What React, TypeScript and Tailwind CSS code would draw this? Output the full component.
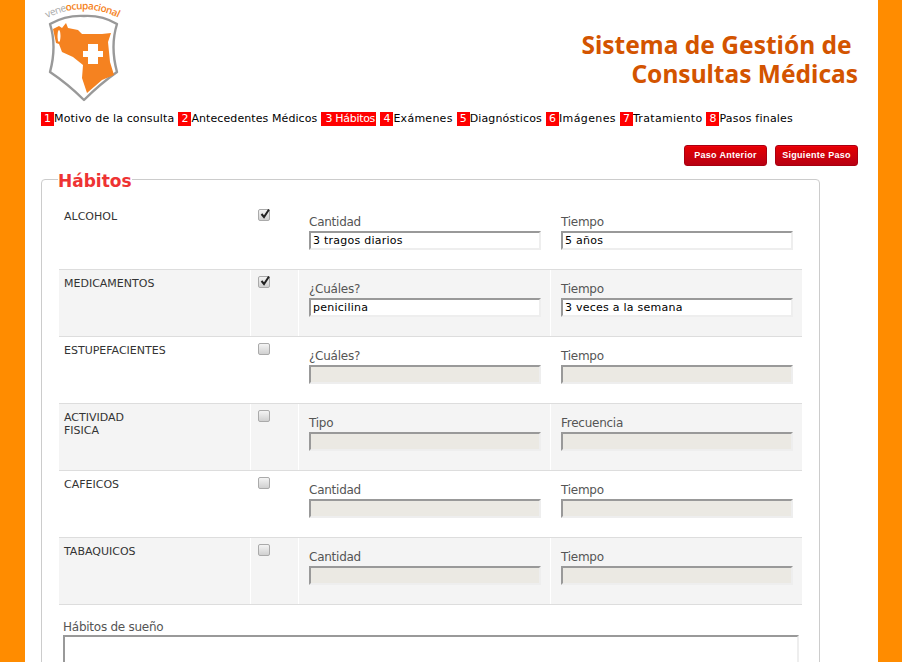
const steps = [
  { n: "1", label: "Motivo de la consulta", track: "tracking-[0.14px]" },
  { n: "2", label: "Antecedentes Médicos", track: "tracking-[0.09px]" },
  { n: "3 Hábitos", label: "", track: "" },
  { n: "4", label: "Exámenes", track: "tracking-[0.26px]" },
  { n: "5", label: "Diagnósticos", track: "tracking-[0.14px]" },
  { n: "6", label: "Imágenes", track: "tracking-[0.39px]" },
  { n: "7", label: "Tratamiento", track: "tracking-[0.32px]" },
  { n: "8", label: "Pasos finales", track: "tracking-[0.22px]" },
];

const habits = [
  { name: ["ALCOHOL"], checked: true, a: "Cantidad", b: "Tiempo", va: "3 tragos diarios", vb: "5 años" },
  { name: ["MEDICAMENTOS"], checked: true, a: "¿Cuáles?", b: "Tiempo", va: "penicilina", vb: "3 veces a la semana" },
  { name: ["ESTUPEFACIENTES"], checked: false, a: "¿Cuáles?", b: "Tiempo", va: "", vb: "" },
  { name: ["ACTIVIDAD", "FISICA"], checked: false, a: "Tipo", b: "Frecuencia", va: "", vb: "" },
  { name: ["CAFEICOS"], checked: false, a: "Cantidad", b: "Tiempo", va: "", vb: "" },
  { name: ["TABAQUICOS"], checked: false, a: "Cantidad", b: "Tiempo", va: "", vb: "" },
];

function Logo() {
  return (
    <svg viewBox="40 0 90 105" className="h-[105px] w-[90px] shrink-0">
      <path
        d="M50 24 Q66 15 84 16 Q102 15 117 24 Q110 46 117 72 Q100 84 84 100 Q68 84 50 72 Q57 46 50 24 Z"
        fill="#fff"
        stroke="#999"
        strokeWidth="2.4"
        strokeLinejoin="round"
      />
      <path
        d="M53 29 L59 26 L62 28 L66 23 L68 28 L78 30 L82 34 L102 34 L111 33 L108 42 L110 62 L114 75 L102 80 L87 93 L82 78 L83 65 L73 57 L62 52 L59 44 L56 43 Z"
        fill="#f58220"
      />
      <ellipse cx="59" cy="36" rx="1.5" ry="6" fill="#fff" />
      <path d="M88 44 H98 V51 H103 V57 H98 V64 H88 V57 H83 V51 H88 Z" fill="#fff" />
      <defs>
        <path id="logo-arc" d="M47 18 Q84 0 121 19" />
      </defs>
      <text className="font-['Open_Sans',sans-serif] text-[10px] font-semibold" fill="#f58220">
        <textPath href="#logo-arc" textLength={74}>
          <tspan fill="#aaa" fontWeight="400">vene</tspan>ocupacional
        </textPath>
      </text>
    </svg>
  );
}

function Check() {
  return (
    <svg viewBox="0 0 12 12" className="pointer-events-none absolute left-px top-[-1px] h-3 w-3">
      <path d="M2.5 6 L5 9 L10 1.5" fill="none" stroke="#222" strokeWidth="2" />
    </svg>
  );
}

function Field({ label, value, disabled }: { label: string; value: string; disabled: boolean }) {
  return (
    <div className="pl-[10px] pt-[11px]">
      <label className="block h-[17px] text-[12px] leading-[17px] tracking-[-0.25px] text-[#555]">{label}</label>
      <input
        readOnly
        disabled={disabled}
        value={value}
        className={`block h-[19px] w-[232px] border-2 border-b-[#eee] border-l-[#999] border-r-[#eee] border-t-[#999] px-[2px] text-[11px] tracking-[0.25px] text-black outline-none ${
          disabled ? "bg-[#ebe9e3]" : "bg-white"
        }`}
      />
    </div>
  );
}

function StepButton({ children }: { children: string }) {
  return (
    <button className="h-[21px] w-[83px] rounded-[3px] border border-[#a80010] bg-gradient-to-b from-[#e60000] to-[#b80012] font-['Liberation_Sans',sans-serif] text-[9px] font-bold tracking-[0.3px] text-white shadow-[inset_0_1px_0_#f00010]">
      {children}
    </button>
  );
}

export default function App() {
  return (
    <div className="h-screen overflow-hidden bg-[#ff8c00] px-[25px] font-['DejaVu_Sans',sans-serif]">
      <div className="h-full w-[853px] overflow-hidden bg-white pl-[16px] pr-[20px]">
        <header className="flex h-[105px] items-start justify-between">
          <div className="-ml-px">
            <Logo />
          </div>
          <h1 className="pt-[30px] text-right font-['Noto_Sans',sans-serif] text-[24.5px] font-bold leading-[29px] text-[#d35400]">
            Sistema de Gestión de&nbsp;
            <br />
            Consultas Médicas
          </h1>
        </header>

        <nav className="mt-[7px] flex h-[14px] gap-[4px] text-[11px] leading-[14px] text-black">
          {steps.map((s) =>
            s.label ? (
              <div key={s.n} className="flex">
                <span className="w-[13px] bg-[#f00] text-center text-white">{s.n}</span>
                <span className={s.track}>{s.label}</span>
              </div>
            ) : (
              <span key={s.n} className="w-[55px] bg-[#f00] pl-[4px] tracking-[-0.3px] text-white">
                {s.n}
              </span>
            )
          )}
        </nav>

        <div className="mt-[19px] flex justify-end gap-[8px]">
          <StepButton>Paso Anterior</StepButton>
          <StepButton>Siguiente Paso</StepButton>
        </div>

        <fieldset className="w-[779px] rounded-[4px] border border-[#ccc] px-[17px] pb-4 pt-[11px]">
          <legend className="-ml-px pt-[4px] font-['DejaVu_Sans',sans-serif] text-[17px] font-bold leading-[22px] text-[#ee3333]">
            Hábitos
          </legend>

          {habits.map((h, i) => (
            <div
              key={h.name[0]}
              className={`grid h-[67px] grid-cols-[191px_47px_251px_251px] gap-x-px border-b border-[#ddd] ${
                i % 2 === 1 ? "[&>div]:bg-[#f4f4f4]" : ""
              }`}
            >
              <div className="pl-[5px] pt-[7px] text-[11px] leading-[13px] text-[#333]">
                {h.name.map((line) => (
                  <div key={line}>{line}</div>
                ))}
              </div>
              <div className="pl-[8px] pt-[6px]">
                <span className="relative -ml-px block h-[12px] w-[12px]">
                  <input
                    type="checkbox"
                    readOnly
                    checked={h.checked}
                    className="block h-[12px] w-[12px] appearance-none rounded-[2px] border border-[#aaa] bg-gradient-to-b from-[#f4f4f4] to-[#d0d0d0]"
                  />
                  {h.checked && <Check />}
                </span>
              </div>
              <Field label={h.a} value={h.va} disabled={!h.checked} />
              <Field label={h.b} value={h.vb} disabled={!h.checked} />
            </div>
          ))}

          <div className="pl-[4px] pt-[14px]">
            <label className="block h-[16px] text-[12px] leading-[17px] tracking-[-0.25px] text-[#555]">Hábitos de sueño</label>
            <textarea
              readOnly
              className="block h-[80px] w-[736px] resize-none border-2 border-b-[#eee] border-l-[#999] border-r-[#eee] border-t-[#999] bg-white outline-none"
            />
          </div>
        </fieldset>
      </div>
    </div>
  );
}
